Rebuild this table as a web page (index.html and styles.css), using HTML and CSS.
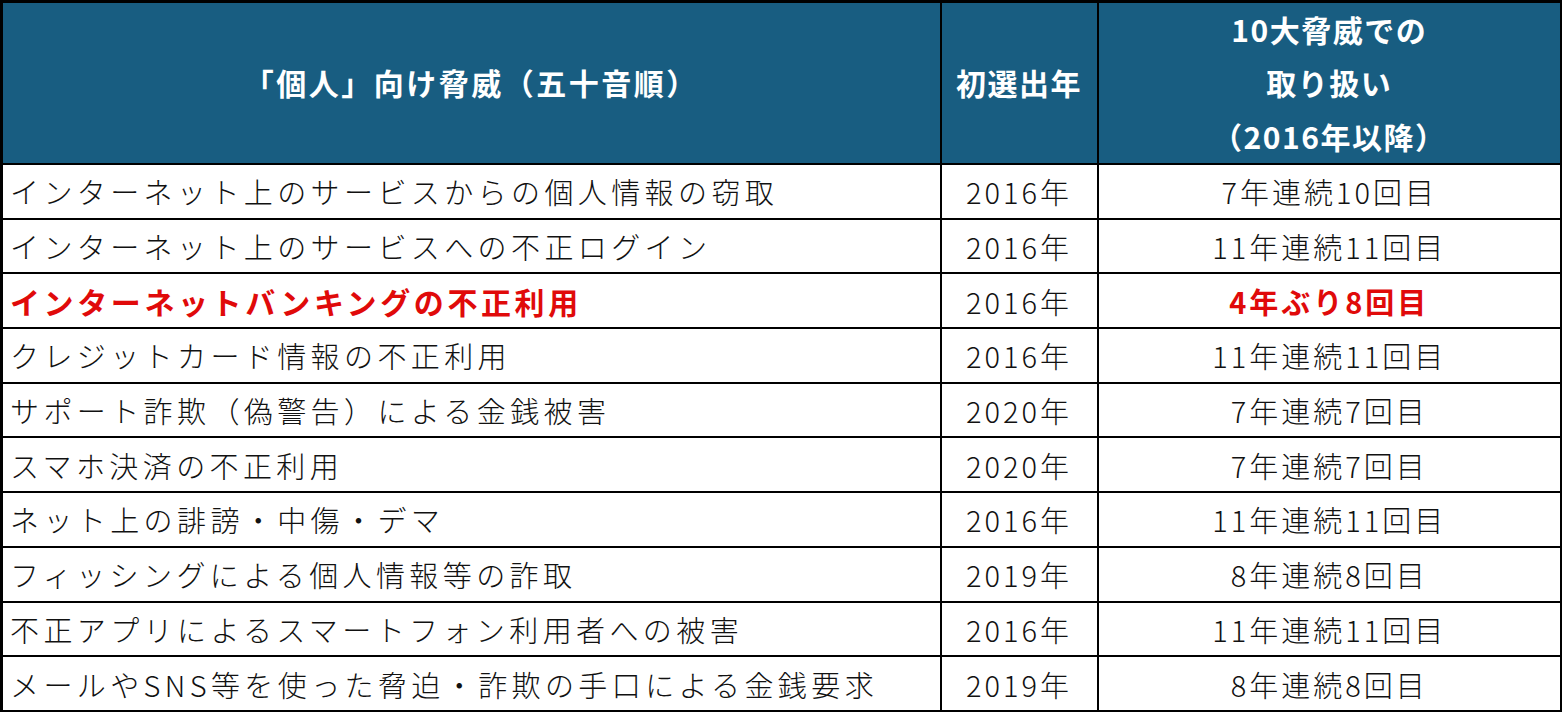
FILE: index.html
```html
<!DOCTYPE html>
<html lang="ja">
<head>
<meta charset="utf-8">
<link rel="stylesheet" href="styles.css">
</head>
<body>
<table class="threats">
  <colgroup>
    <col class="c-name">
    <col class="c-year">
    <col class="c-count">
  </colgroup>
  <thead>
    <tr>
      <th>「個人」向け脅威（五十音順）</th>
      <th>初選出年</th>
      <th>10大脅威での<br>取り扱い<br>（2016年以降）</th>
    </tr>
  </thead>
  <tbody>
    <tr><td class="name">インターネット上のサービスからの個人情報の窃取</td><td>2016年</td><td>7年連続10回目</td></tr>
    <tr><td class="name">インターネット上のサービスへの不正ログイン</td><td>2016年</td><td>11年連続11回目</td></tr>
    <tr class="hl"><td class="name">インターネットバンキングの不正利用</td><td class="plain">2016年</td><td>4年ぶり8回目</td></tr>
    <tr><td class="name">クレジットカード情報の不正利用</td><td>2016年</td><td>11年連続11回目</td></tr>
    <tr><td class="name">サポート詐欺（偽警告）による金銭被害</td><td>2020年</td><td>7年連続7回目</td></tr>
    <tr><td class="name">スマホ決済の不正利用</td><td>2020年</td><td>7年連続7回目</td></tr>
    <tr><td class="name">ネット上の誹謗・中傷・デマ</td><td>2016年</td><td>11年連続11回目</td></tr>
    <tr><td class="name">フィッシングによる個人情報等の詐取</td><td>2019年</td><td>8年連続8回目</td></tr>
    <tr><td class="name">不正アプリによるスマートフォン利用者への被害</td><td>2016年</td><td>11年連続11回目</td></tr>
    <tr><td class="name">メールやSNS等を使った脅迫・詐欺の手口による金銭要求</td><td>2019年</td><td>8年連続8回目</td></tr>
  </tbody>
</table>
</body>
</html>
```
FILE: styles.css
```css
html, body {
  margin: 0;
  padding: 0;
  background: #ffffff;
}

.threats {
  width: 1560px;
  border-collapse: collapse;
  table-layout: fixed;
  border: 3px solid #000;
  font-family: "Noto Sans CJK JP", "Noto Sans", sans-serif;
  color: #111;
}

.c-name { width: 939px; }
.c-year { width: 157px; }
.c-count { width: 464px; }

.threats th,
.threats td {
  border: 2px solid #000;
  padding: 0;
  text-align: center;
  vertical-align: middle;
  white-space: nowrap;
  overflow: hidden;
}

.threats th {
  background: #185d81;
  color: #ffffff;
  font-weight: 700;
  font-size: 30px;
  letter-spacing: 1.5px;
  line-height: 53.3px;
  height: 160px;
}

.threats th:first-child {
  letter-spacing: 2.5px;
}

.threats td {
  height: 52.7px;
  font-size: 29px;
  font-weight: 300;
  letter-spacing: 3px;
  line-height: 40px;
}

.threats td.name {
  text-align: left;
  padding-left: 7px;
  letter-spacing: 4.4px;
}

.threats tr.hl td {
  color: #e00a0a;
  font-weight: 700;
}

.threats tr.hl td.name {
  font-size: 30px;
  letter-spacing: 3.6px;
}

.threats tr.hl td.plain {
  color: #111;
  font-weight: 300;
}
```
